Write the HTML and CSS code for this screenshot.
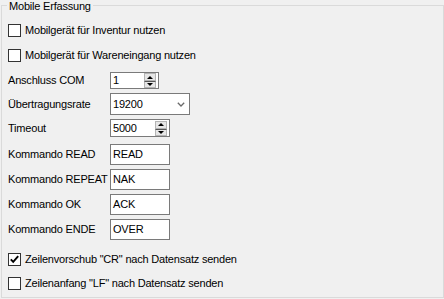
FILE: index.html
```html
<!DOCTYPE html>
<html lang="de">
<head>
<meta charset="utf-8">
<title>Mobile Erfassung</title>
<link rel="stylesheet" href="styles.css">
</head>
<body>
<div class="group">
  <span class="legend">Mobile Erfassung</span>
  <div class="rows">
    <div class="row check">
      <span class="box"></span><span class="ctext">Mobilgerät für Inventur nutzen</span>
    </div>
    <div class="row check r-cb2">
      <span class="box"></span><span class="ctext">Mobilgerät für Wareneingang nutzen</span>
    </div>
    <div class="row r-com">
      <span class="label">Anschluss COM</span>
      <div class="spin spin-com">
        <span class="val">1</span>
        <span class="btns"><span class="btn btn-up"><span class="up"></span></span><span class="btn btn-down"><span class="down"></span></span></span>
      </div>
    </div>
    <div class="row r-rate">
      <span class="label">Übertragungsrate</span>
      <div class="combo">
        <span class="val">19200</span>
        <svg class="chev" width="8" height="5" viewBox="0 0 8 5"><path d="M0.8 0.8 L4 4 L7.2 0.8" fill="none" stroke="#6a6a6a" stroke-width="1.3"/></svg>
      </div>
    </div>
    <div class="row r-time">
      <span class="label">Timeout</span>
      <div class="spin spin-time">
        <span class="val">5000</span>
        <span class="btns"><span class="btn btn-up"><span class="up"></span></span><span class="btn btn-down"><span class="down"></span></span></span>
      </div>
    </div>
    <div class="row r-read">
      <span class="label">Kommando READ</span>
      <div class="text">READ</div>
    </div>
    <div class="row r-txt">
      <span class="label">Kommando REPEAT</span>
      <div class="text">NAK</div>
    </div>
    <div class="row r-txt">
      <span class="label">Kommando OK</span>
      <div class="text">ACK</div>
    </div>
    <div class="row r-txt">
      <span class="label">Kommando ENDE</span>
      <div class="text">OVER</div>
    </div>
    <div class="row check r-cb3">
      <span class="box"><svg width="11" height="11" viewBox="0 0 11 11"><path d="M1.8 5.4 L4.2 7.9 L9.2 2.2" fill="none" stroke="#000" stroke-width="1.9"/></svg></span><span class="ctext">Zeilenvorschub "CR" nach Datensatz senden</span>
    </div>
    <div class="row check r-cb4">
      <span class="box"></span><span class="ctext">Zeilenanfang "LF" nach Datensatz senden</span>
    </div>
  </div>
</div>
</body>
</html>
```

FILE: styles.css
```css
html, body {
  margin: 0;
  padding: 0;
  background: #f0f0f0;
}
body {
  width: 444px;
  height: 299px;
  overflow: hidden;
  font-family: "Liberation Sans", Arial, sans-serif;
  font-size: 11px;
  line-height: 13px;
  letter-spacing: -0.2px;
  color: #000;
}
.group {
  position: relative;
  box-sizing: border-box;
  margin: 5px 0 0 1px;
  height: 293px;
  border: 1px solid #dadada;
  padding: 18px 0 0 6px;
}
.legend {
  position: absolute;
  top: -6px;
  left: 5px;
  padding: 0 2px;
  background: #f0f0f0;
}
.rows {
  display: flex;
  flex-direction: column;
}
.row {
  display: flex;
  align-items: center;
}
.check {
  height: 13px;
}
.box {
  box-sizing: border-box;
  width: 13px;
  height: 13px;
  border: 1px solid #333;
  background: #fff;
  display: flex;
  align-items: center;
  justify-content: center;
  margin-right: 4px;
}
.box svg { display: block; }
.r-cb2 { margin-top: 12px; }
.r-com { margin-top: 10px; }
.r-rate { margin-top: 4px; }
.r-time { margin-top: 4px; }
.r-read { margin-top: 7px; }
.r-txt { margin-top: 4px; }
.r-cb3 { margin-top: 13px; }
.r-cb4 { margin-top: 11px; }
.label {
  width: 102px;
  flex: none;
}
.spin, .combo, .text {
  box-sizing: border-box;
  background: #fff;
  border: 1px solid #7a7a7a;
  display: flex;
  align-items: center;
}
.val {
  flex: 1;
  padding-left: 2px;
}
.spin-com { width: 49px; height: 17px; }
.spin-time { width: 60px; height: 18px; }
.btns {
  display: flex;
  flex-direction: column;
  margin-right: 2px;
}
.btn {
  box-sizing: border-box;
  width: 12px;
  border: 1px solid #b4b4b4;
  background: #e6e6e6;
  display: flex;
  align-items: center;
  justify-content: center;
}
.btn-up { height: 8px; }
.btn-down { height: 7px; border-top-color: #555; }
.up {
  width: 0;
  height: 0;
  border-left: 3.5px solid transparent;
  border-right: 3.5px solid transparent;
  border-bottom: 3.5px solid #000;
}
.down {
  width: 0;
  height: 0;
  border-left: 3.5px solid transparent;
  border-right: 3.5px solid transparent;
  border-top: 3.5px solid #000;
}
.combo {
  width: 80px;
  height: 22px;
  padding-right: 4px;
}
.chev { display: block; }
.text {
  width: 60px;
  height: 21px;
  padding-left: 2px;
}
```
